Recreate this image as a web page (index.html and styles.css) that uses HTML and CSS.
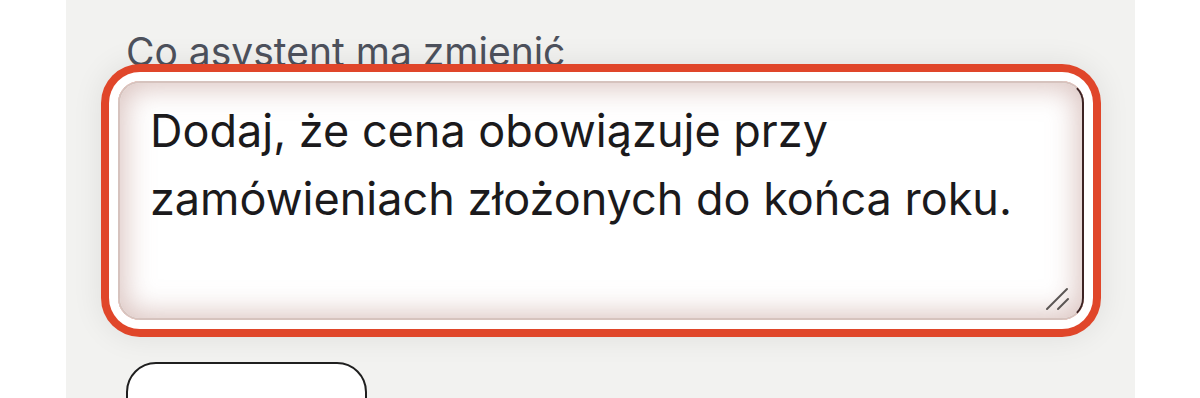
FILE: index.html
```html
<!DOCTYPE html>
<html lang="pl">
<head>
<meta charset="utf-8">
<title>Co asystent ma zmienić</title>
<link rel="stylesheet" href="styles.css">
</head>
<body>
<div class="panel">
  <label class="field-label" for="change">Co asystent ma zmienić</label>
  <div class="field">
    <textarea id="change" class="field-input">Dodaj, że cena obowiązuje przy zamówieniach złożonych do końca roku.</textarea>
    <svg class="grip" width="26" height="26" viewBox="0 0 26 26" aria-hidden="true">
      <line x1="22" y1="2" x2="2" y2="22" stroke="#5a5553" stroke-width="2" stroke-linecap="round"/>
      <line x1="23" y1="12" x2="13" y2="22" stroke="#5a5553" stroke-width="2" stroke-linecap="round"/>
    </svg>
  </div>
  <button class="action" type="button" aria-label="Wyślij"></button>
</div>
</body>
</html>
```
FILE: styles.css
```css
html, body {
  margin: 0;
  padding: 0;
  background: #ffffff;
  height: 100%;
  overflow: hidden;
}

.panel {
  margin-left: 66px;
  width: 1069px;
  min-height: 100vh;
  box-sizing: border-box;
  background: #f2f2f0;
  padding: 28px 51px 0 52px;
  display: flex;
  flex-direction: column;
  align-items: flex-start;
}

.field-label {
  display: block;
  margin-left: 8px;
  font-family: Inter, "Noto Sans", sans-serif;
  font-size: 39px;
  line-height: 48px;
  color: #4d515c;
  margin-bottom: 5px;
}

.field {
  position: relative;
  z-index: 1;
  width: 966px;
  height: 239px;
  border-radius: 22px;
  box-shadow:
    0 0 0 9px #ffffff,
    0 0 0 17px #e0462a,
    0 0 30px 18px rgba(0, 0, 0, 0.08);
}

.field-input {
  display: block;
  width: 100%;
  height: 100%;
  box-sizing: border-box;
  margin: 0;
  padding: 14px 30px 0 30px;
  font-family: Inter, "Noto Sans", sans-serif;
  font-size: 45px;
  line-height: 68px;
  color: #1b1a1c;
  background: #ffffff;
  border: 2px solid #d6c3be;
  border-right-color: #3d2424;
  border-radius: 22px;
  outline: none;
  resize: none;
  box-shadow: inset 0 0 28px 5px rgba(190, 148, 140, 0.55);
}

.grip {
  position: absolute;
  right: 13px;
  bottom: 7px;
}

.action {
  margin-top: 42px;
  margin-left: 8px;
  width: 241px;
  height: 72px;
  background: #ffffff;
  border: 2px solid #1f1f1f;
  border-radius: 30px;
}
```
